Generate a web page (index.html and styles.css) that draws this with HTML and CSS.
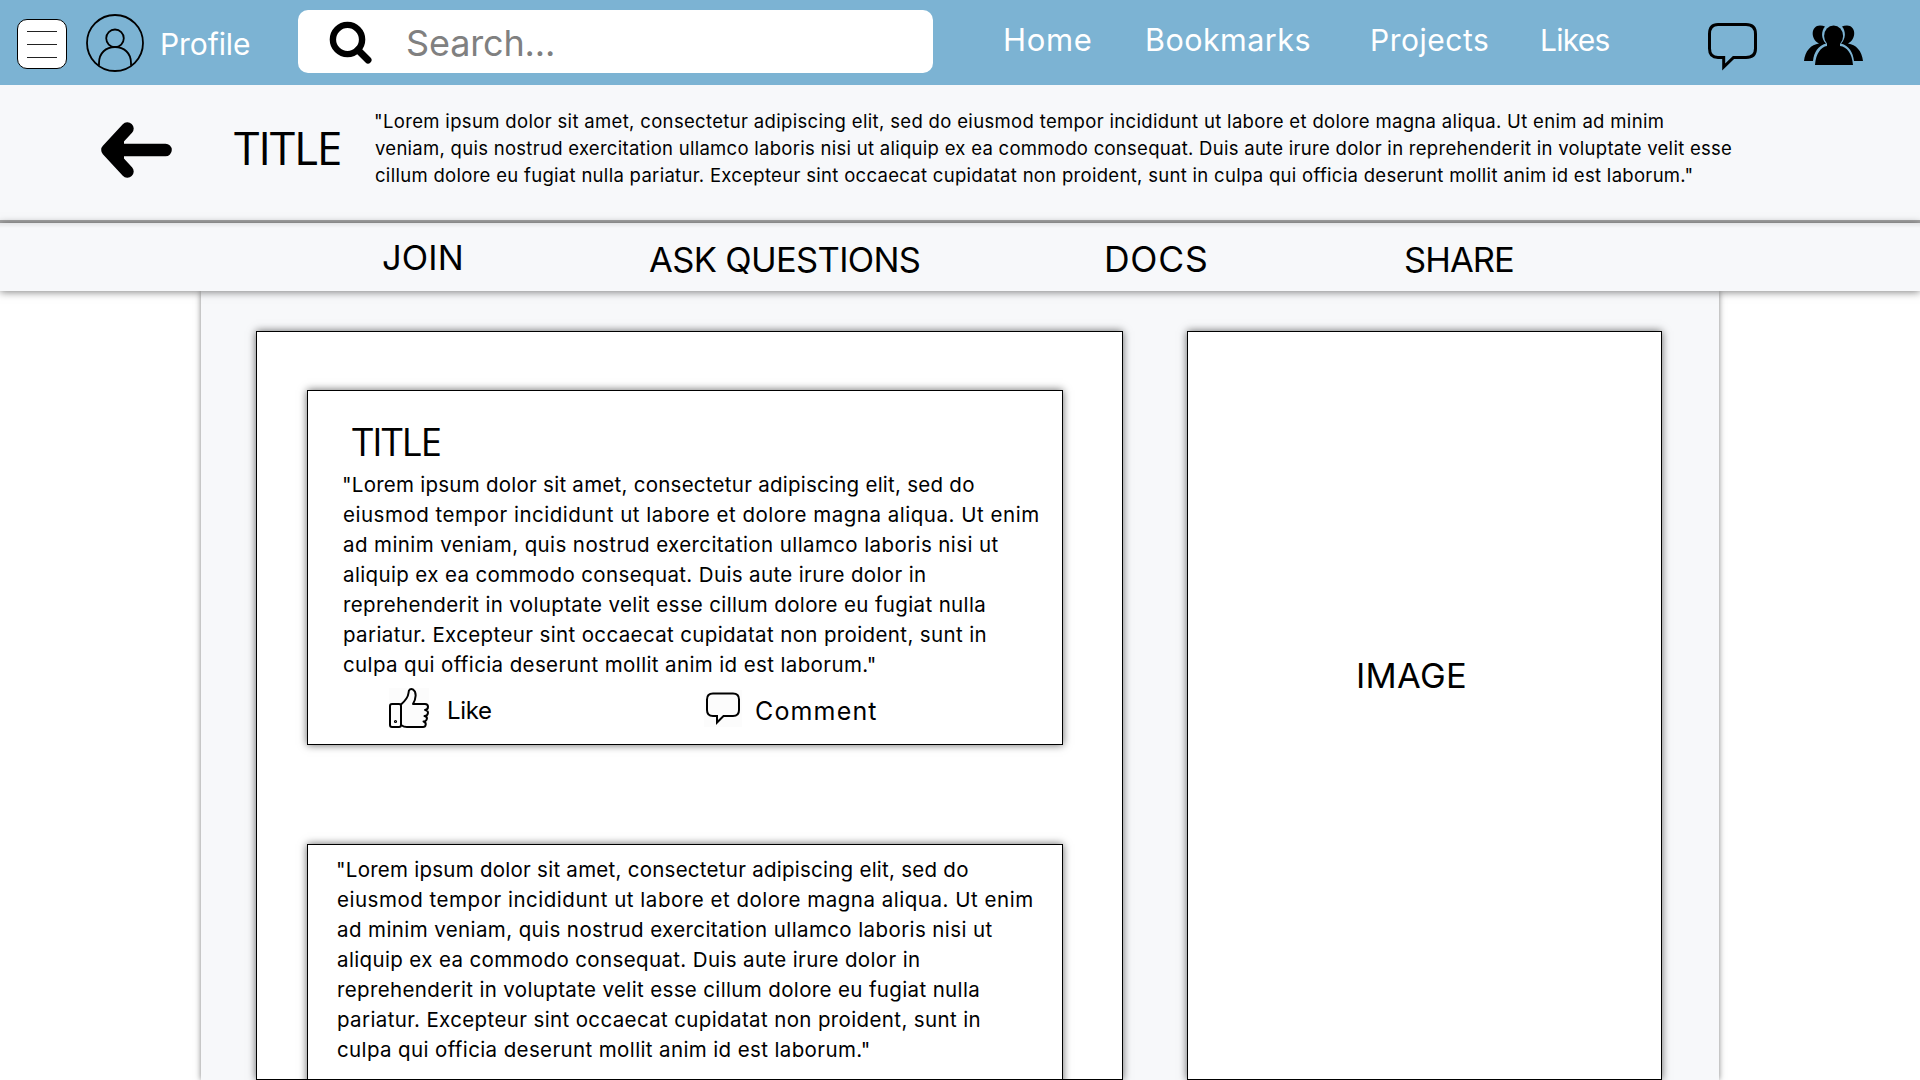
FILE: index.html
```html
<!DOCTYPE html>
<html lang="en">
<head>
<meta charset="utf-8">
<title>Project</title>
<link rel="stylesheet" href="styles.css">
</head>
<body>
<header class="topbar">
  <button class="menu" aria-label="Menu"><span></span><span></span><span></span></button>
  <svg class="avatar" viewBox="0 0 58 58" fill="none" stroke="#000" stroke-width="1.8"><circle cx="29" cy="29" r="28"/><circle cx="29" cy="24.3" r="8.8"/><path d="M13 51.500V49C13 39 20 33 29 33S45 39 45 49V51.500"/></svg>
  <span class="profile">Profile</span>
  <div class="search">
    <svg class="lens" viewBox="0 0 44 44" fill="none" stroke="#000"><circle cx="18.500" cy="18.500" r="14.600" stroke-width="6.400"/><path d="M29 29L39 39" stroke-width="7" stroke-linecap="round"/></svg>
    <span class="placeholder">Search...</span>
  </div>
  <nav class="links"><a class="home">Home</a><a class="bookmarks">Bookmarks</a><a class="projects">Projects</a><a class="likes">Likes</a></nav>
  <svg class="chat" viewBox="0 0 56 54" fill="none" stroke="#000" stroke-width="3"><path d="M13 5.500H41Q50.500 5.500 50.500 15V29.500Q50.500 38.500 41 38.500H28.500L18.700 48V38.500H13Q4.500 38.500 4.500 29.500V15Q4.500 5.500 13 5.500Z"/></svg>
  <svg class="group" viewBox="0 0 62 44"><path d="M1 37C2 27 8 20.500 16 19.500C7 15 8 1.500 17 1.500Q20 1.500 22 2.500C18 7 18 15 23 19.500C15 22 11 28 10 37Z"/><path d="M60 37C59 27 53 20.500 45 19.500C54 15 53 1.500 44 1.500Q41 1.500 39 2.500C43 7 43 15 38 19.500C46 22 50 28 51 37Z"/><ellipse cx="30.600" cy="12" rx="9.500" ry="10.500"/><path d="M24 18H37V22C44 23 49 29 50 41H12C13 29 18 23 24 22Z"/></svg>
</header>
<section class="intro">
  <svg class="back" viewBox="0 0 74 60" fill="none" stroke="#000" stroke-width="12.600" stroke-linecap="round" stroke-linejoin="round"><path d="M27.400 8.500L7.500 30L27.400 51.500M7.500 30H65.500"/><path d="M8 30L24 18V42Z" stroke="none" fill="#000"/></svg>
  <h1 class="title">TITLE</h1>
  <p class="summary">
    <span class="s1">"Lorem ipsum dolor sit amet, consectetur adipiscing elit, sed do eiusmod tempor incididunt ut labore et dolore magna aliqua. Ut enim ad minim</span>
    <span class="s2">veniam, quis nostrud exercitation ullamco laboris nisi ut aliquip ex ea commodo consequat. Duis aute irure dolor in reprehenderit in voluptate velit esse</span>
    <span class="s3">cillum dolore eu fugiat nulla pariatur. Excepteur sint occaecat cupidatat non proident, sunt in culpa qui officia deserunt mollit anim id est laborum."</span>
  </p>
</section>
<nav class="tabs"><a class="join">JOIN</a><a class="ask">ASK QUESTIONS</a><a class="docs">DOCS</a><a class="share">SHARE</a></nav>
<main class="panel">
  <section class="feed">
    <article class="card">
      <h2 class="card-title">TITLE</h2>
      <p class="text">
        <span class="t1">"Lorem ipsum dolor sit amet, consectetur adipiscing elit, sed do</span>
        <span class="t2">eiusmod tempor incididunt ut labore et dolore magna aliqua. Ut enim</span>
        <span class="t3">ad minim veniam, quis nostrud exercitation ullamco laboris nisi ut</span>
        <span class="t4">aliquip ex ea commodo consequat. Duis aute irure dolor in</span>
        <span class="t5">reprehenderit in voluptate velit esse cillum dolore eu fugiat nulla</span>
        <span class="t6">pariatur. Excepteur sint occaecat cupidatat non proident, sunt in</span>
        <span class="t7">culpa qui officia deserunt mollit anim id est laborum."</span>
      </p>
      <div class="actions">
        <svg class="thumb" viewBox="0 0 40 40" fill="none" stroke="#000" stroke-width="2" stroke-linejoin="round" stroke-linecap="round"><rect x="1" y="16" width="11" height="23" rx="2"/><path d="M12 16.500C16 13 19 10 19.500 5C19.500 1 22 .5 24 1.500C28 4 27 11 24 16H36C40 16 40 21.500 36 22C40.500 22.500 39.500 28 35.500 28C39.500 29 38 33.500 34.500 33.500C38 34.500 37 39 34 39H18Q15 39 12 37"/><circle cx="6.500" cy="33.500" r=".6"/></svg>
        <span class="like">Like</span>
        <svg class="bubble" viewBox="0 0 38 37" fill="none" stroke="#000" stroke-width="2"><path d="M9 3.500H29Q35 3.500 35 9.500V20Q35 26 29 26H19.500L13 32.500V26H9Q3 26 3 20V9.500Q3 3.500 9 3.500Z"/></svg>
        <span class="comment">Comment</span>
      </div>
    </article>
    <article class="card plain">
      <p class="text">
        <span class="t1">"Lorem ipsum dolor sit amet, consectetur adipiscing elit, sed do</span>
        <span class="t2">eiusmod tempor incididunt ut labore et dolore magna aliqua. Ut enim</span>
        <span class="t3">ad minim veniam, quis nostrud exercitation ullamco laboris nisi ut</span>
        <span class="t4">aliquip ex ea commodo consequat. Duis aute irure dolor in</span>
        <span class="t5">reprehenderit in voluptate velit esse cillum dolore eu fugiat nulla</span>
        <span class="t6">pariatur. Excepteur sint occaecat cupidatat non proident, sunt in</span>
        <span class="t7">culpa qui officia deserunt mollit anim id est laborum."</span>
      </p>
    </article>
  </section>
  <aside class="media"><span>IMAGE</span></aside>
</main>
</body>
</html>
```
FILE: styles.css
```css
* { box-sizing: border-box; }
body { margin: 0; width: 1920px; height: 1080px; overflow: hidden; background: #fff; color: #000; font-family: Inter, sans-serif; display: flex; flex-direction: column; }
h1, h2, p { margin: 0; font-weight: 400; }
svg { display: block; flex: none; }
span, a { white-space: nowrap; flex: none; }

.topbar { flex: none; height: 85px; background: #7cb3d3; display: flex; align-items: flex-start; font-size: 30px; line-height: 40px; color: #fff; }
.menu { flex: none; margin: 19px 0 0 17px; padding: 11px 9px; width: 50px; height: 50px; background: #fff; border: 1px solid #000; border-radius: 10px; display: flex; flex-direction: column; gap: 12px; }
.menu span { height: 1px; width: 30px; background: #222; }
.avatar { width: 58px; height: 58px; margin: 14px 0 0 19px; }
.profile { margin: 24px 0 0 16px; width: 92px; letter-spacing: -.1px; }
.search { flex: none; margin: 10px 0 0 46px; width: 635px; height: 63px; background: #fff; border-radius: 10px; display: flex; }
.lens { width: 44px; height: 44px; margin: 11px 0 0 31px; }
.placeholder { margin: 11px 0 0 33px; font-size: 36px; line-height: 44px; letter-spacing: -.15px; color: #808080; }
.links { display: flex; margin: 20px 0 0 70px; width: 702px; }
.home { width: 142px; font-size: 31px; letter-spacing: .65px; }
.bookmarks { width: 225px; font-size: 30.500px; letter-spacing: .45px; }
.projects { width: 170px; letter-spacing: .52px; }
.likes { width: 165px; letter-spacing: -.75px; }
.chat { width: 56px; height: 54px; margin-top: 19px; }
.group { width: 62px; height: 44px; margin: 24px 0 0 42px; }

.intro { flex: none; height: 138px; background: #f7f8fa; border-bottom: 3px solid #a9a9a9; display: flex; align-items: flex-start; }
.back { width: 74px; height: 60px; margin: 35px 0 0 100px; }
.title { width: 140px; margin: 32px 0 0 60px; font: 400 46px/60px "Open Sans", sans-serif; letter-spacing: -1.2px; }
.summary { margin-top: 23px; font-size: 18.5px; line-height: 27px; }
.summary span, .text span { display: block; }
.s1 { letter-spacing: .335px; }
.s2 { letter-spacing: .28px; padding-left: 1px; }
.s3 { letter-spacing: .3px; padding-left: 1px; }

/* The tab bar casts its shadow over the content panel */
.tabs { flex: none; position: relative; height: 68px; padding: 13px 0 0 382px; background: linear-gradient(#e3e4e6, #f7f8fa 5px); box-shadow: 0 1px 8px rgba(0, 0, 0, .5); display: flex; align-items: flex-start; font-size: 34.5px; line-height: 44px; }
.join { width: 267px; letter-spacing: .1px; }
.ask { width: 455px; margin-top: 2px; letter-spacing: -.65px; }
.docs { width: 300px; margin-top: 2px; font-size: 35.5px; letter-spacing: .75px; }
.share { margin-top: 2px; letter-spacing: -.94px; }

.panel { flex: none; width: 1518px; height: 789px; margin-left: 201px; padding: 40px 0 0 55px; background: #f7f8fa; box-shadow: 0 0 6px rgba(0, 0, 0, .5); display: flex; gap: 64px; }
.feed, .media { flex: none; height: 749px; background: #fff; border: 1px solid #000; box-shadow: 0 0 8px rgba(0, 0, 0, .6); }
.feed { width: 867px; padding: 58px 0 0 50px; overflow: hidden; display: flex; flex-direction: column; gap: 99px; }
.card { flex: none; width: 756px; height: 355px; padding: 25px 0 0 34px; background: #fff; border: 1px solid #000; box-shadow: 0 0 8px rgba(0, 0, 0, .6); }
.card-title { margin-left: 10px; font: 400 38.5px/50px "Open Sans", sans-serif; letter-spacing: -1.2px; }
.text { margin-top: 4px; font-size: 20.5px; line-height: 30px; }
.text span + span { padding-left: 1px; }
.plain { padding: 6px 0 0 28px; }
.t1 { letter-spacing: .255px; }
.t2 { letter-spacing: .52px; }
.t3 { letter-spacing: .4px; }
.t4 { letter-spacing: .37px; }
.t5 { letter-spacing: .36px; }
.t6 { letter-spacing: .37px; }
.t7 { letter-spacing: .38px; }
.actions { display: flex; align-items: flex-start; font-size: 24px; line-height: 30px; }
.thumb { width: 40px; height: 40px; margin: 8px 0 0 47px; background: #fcfcfc; }
.like { width: 60px; margin: 16px 0 0 18px; letter-spacing: -.34px; }
.bubble { width: 38px; height: 37px; margin: 10px 0 0 197px; background: #fcfcfc; }
.comment { margin: 16px 0 0 13px; font-size: 25px; letter-spacing: 1.15px; }
.media { width: 475px; padding: 322px 0 0 168px; font-size: 34.5px; line-height: 44px; letter-spacing: .3px; }
```
